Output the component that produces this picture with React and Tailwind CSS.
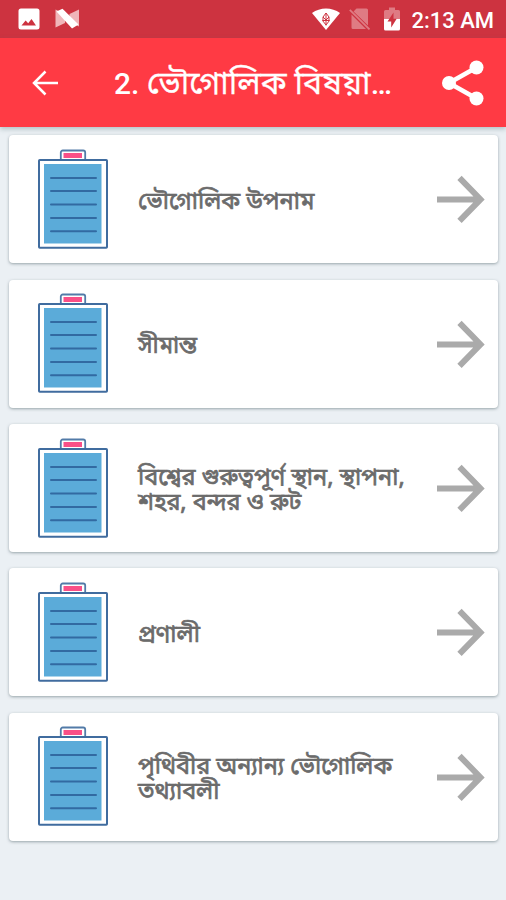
const items = [
  'ভৌগোলিক উপনাম',
  'সীমান্ত',
  'বিশ্বের গুরুত্বপূর্ণ স্থান, স্থাপনা, শহর, বন্দর ও রুট',
  'প্রণালী',
  'পৃথিবীর অন্যান্য ভৌগোলিক তথ্যাবলী',
];

function StatusBar() {
  return (
    <div className="h-[38px] bg-[#cd3340] flex items-center text-white">
      <svg className="ml-[18px] shrink-0" width="22" height="22" viewBox="0 0 22 22">
        <path fill="#fff" fillRule="evenodd" d="M3 0.5h16a2.5 2.5 0 0 1 2.5 2.5v16a2.5 2.5 0 0 1-2.5 2.5H3A2.5 2.5 0 0 1 .5 19V3A2.5 2.5 0 0 1 3 .5zM3.5 17.5h14.5l-4.5-6.5-3.3 4.3-2.6-2.8z" />
      </svg>
      <svg className="ml-[14px] shrink-0" width="26" height="22" viewBox="0 0 26 22">
        <path fill="#f0b5b9" d="M1.500 1.500v18L11 15V6zM15.500 6l9.500-4.500v17L15.500 14z" />
        <path fill="#fff" d="M2.500 3.500 8.500.8l16 15.700-6.500 4z" />
      </svg>
      <svg className="ml-auto shrink-0" width="28" height="22" viewBox="0 0 28 22">
        <path fill="#fff" d="M0 5C8-1 20-1 28 5L14 22z" />
        <path fill="none" stroke="#cd3340" strokeWidth="1" d="M14 5v12.500M11 9 14 5l3 4-3 3zM10.500 12.500l3.500 4.500 3.500-4.500zM11 9v3.500M17 9v3.500" />
      </svg>
      <svg className="ml-[9px] shrink-0" width="22" height="22" viewBox="0 0 22 22">
        <path fill="#df7b83" d="M7.500.5H17.500a1.500 1.500 0 0 1 1.500 1.500v15.500L4.500 3.500zM2.500 6.500 17 21H4a1.500 1.500 0 0 1-1.500-1.500z" />
        <path stroke="#df7b83" strokeWidth="1.800" d="M.8 1.800 20.500 21.300" />
      </svg>
      <svg className="ml-[13px] shrink-0" width="16" height="24" viewBox="0 0 16 24">
        <path fill="#df7b83" d="M0 12V4.500A1.500 1.500 0 0 1 1.500 3H5V.5h6V3h3.500A1.500 1.500 0 0 1 16 4.500V12z" />
        <path fill="#fff" d="M0 12h16v10a1.500 1.500 0 0 1-1.500 1.500h-13A1.500 1.500 0 0 1 0 22z" />
        <path fill="#cd3340" d="M9.500 5.500 3.500 14.500h3.700v6l5.500-8.800H9.500z" />
      </svg>
      <span className="ml-[11px] mr-[12px] mt-[3px] font-[Roboto] font-medium text-[22px] leading-none whitespace-nowrap">2:13 AM</span>
    </div>
  );
}

function Header() {
  return (
    <header className="relative h-[89px] bg-[#ff3a44] flex items-center text-white shadow-[0_2px_5px_rgba(70,100,105,0.35)]">
      <svg className="ml-[31px] shrink-0" width="28" height="28" viewBox="0 0 28 28">
        <path fill="none" stroke="#fff" strokeWidth="2.500" d="M27 14H3M14.500 2.500 3 14l11.500 11.500" />
      </svg>
      <h1 className="ml-[55px] w-[290px] mt-px font-[Roboto,'Noto_Sans_Bengali',sans-serif] font-medium text-[30px] leading-[40px] whitespace-nowrap">
        2. <span className="font-normal text-[32px] [-webkit-text-stroke:0.3px_white]">ভৌগোলিক বিষয়া</span>…
      </h1>
      <svg className="ml-auto mr-[22px] shrink-0" width="42" height="46" viewBox="0 0 42 46">
        <path fill="none" stroke="#fff" strokeWidth="4.600" d="M34.500 7.500 7 23l27.500 15.500" />
        <circle cx="7" cy="23" r="7" fill="#fff" />
        <circle cx="34.500" cy="7.500" r="7" fill="#fff" />
        <circle cx="34.500" cy="38.500" r="7" fill="#fff" />
      </svg>
    </header>
  );
}

function Clipboard() {
  return (
    <svg className="shrink-0" width="70" height="100" viewBox="0 0 70 100">
      <path fill="#fff" stroke="#527ba8" strokeWidth="1.800" d="M22.800 11V3.500a2 2 0 0 1 2-2h20.400a2 2 0 0 1 2 2V11" />
      <rect x="25.500" y="4" width="18.500" height="5" fill="#fa4f87" />
      <rect x="1" y="11" width="68" height="87.800" rx=".8" fill="#fff" stroke="#406c9f" strokeWidth="2" />
      <rect x="6" y="15" width="57.500" height="79.500" fill="#5babd9" />
      <path stroke="#326aa2" strokeWidth="2" strokeLinecap="round" d="M13 29h45M13 42h45M13 55.500h45M13 69h45M13 82.300h45" />
    </svg>
  );
}

function TopicCard({ title }) {
  return (
    <div className="h-[128px] bg-white rounded-[4px] flex items-center shadow-[0_1px_3px_rgba(70,90,95,0.5)]">
      <div className="ml-[29px] -mt-px">
        <Clipboard />
      </div>
      <p className="ml-[30px] w-[285px] mt-[8px] font-['Noto_Sans_Bengali',sans-serif] font-normal text-[23.400px] leading-[25px] text-[#6b6b6b] [-webkit-text-stroke:0.7px_#6b6b6b]">
        {title}
      </p>
      <svg className="ml-auto mr-[13px] shrink-0" width="48" height="48" viewBox="0 0 48 48">
        <path fill="none" stroke="#aaa" strokeWidth="6" d="M0 24.400h43M22.500 2.900 43.500 24.400 22.500 45.900" />
      </svg>
    </div>
  );
}

export default function App() {
  return (
    <div className="w-[506px] h-[900px] overflow-hidden bg-[#ebf0f4]">
      <StatusBar />
      <Header />
      <main className="pt-[8.300px] pl-[9px] pr-[8px] flex flex-col gap-[16.400px]">
        {items.map((title) => (
          <TopicCard key={title} title={title} />
        ))}
      </main>
    </div>
  );
}
